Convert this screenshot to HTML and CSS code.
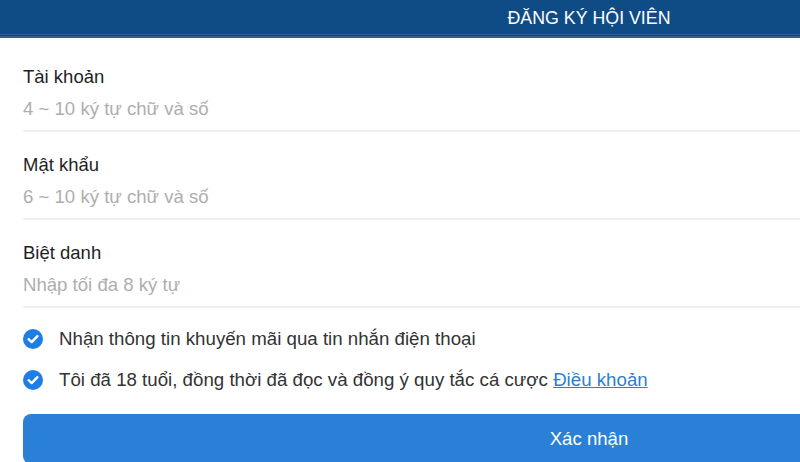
FILE: index.html
```html
<!DOCTYPE html>
<html lang="vi">
<head>
<meta charset="utf-8">
<title>Đăng ký hội viên</title>
<link rel="stylesheet" href="styles.css">
</head>
<body>
<div class="page">
  <header class="topbar">
    <h1 class="title">ĐĂNG KÝ HỘI VIÊN</h1>
  </header>
  <form class="form">
    <div class="field">
      <label class="label">Tài khoản</label>
      <input class="input" type="text" placeholder="4 ~ 10 ký tự chữ và số">
    </div>
    <div class="field">
      <label class="label">Mật khẩu</label>
      <input class="input" type="password" placeholder="6 ~ 10 ký tự chữ và số">
    </div>
    <div class="field">
      <label class="label">Biệt danh</label>
      <input class="input" type="text" placeholder="Nhập tối đa 8 ký tự">
    </div>
    <div class="check first">
      <svg class="tick" viewBox="0 0 20 20" width="20" height="20"><circle cx="10" cy="10" r="10" fill="#1d7ee6"/><path d="M5.6 10.2 L8.7 13.1 L14.4 7.2" fill="none" stroke="#fff" stroke-width="2.4" stroke-linecap="round" stroke-linejoin="round"/></svg>
      <span class="check-text">Nhận thông tin khuyến mãi qua tin nhắn điện thoại</span>
    </div>
    <div class="check">
      <svg class="tick" viewBox="0 0 20 20" width="20" height="20"><circle cx="10" cy="10" r="10" fill="#1d7ee6"/><path d="M5.6 10.2 L8.7 13.1 L14.4 7.2" fill="none" stroke="#fff" stroke-width="2.4" stroke-linecap="round" stroke-linejoin="round"/></svg>
      <span class="check-text">Tôi đã 18 tuổi, đồng thời đã đọc và đồng ý quy tắc cá cược <a class="link" href="#">Điều khoản</a></span>
    </div>
    <button class="submit" type="button">Xác nhận</button>
  </form>
</div>
</body>
</html>
```
FILE: styles.css
```css
html, body {
  margin: 0;
  padding: 0;
  background: #fff;
  overflow: hidden;
}
body {
  font-family: Arial, "Liberation Sans", sans-serif;
  color: #222;
}
.page {
  width: 1178px;
}
.topbar {
  height: 38px;
  background: linear-gradient(to bottom, #0f4c86 0, #0f4c86 34px, #2a5f96 34px, #2a5f96 35px, #0d4680 35px, #0d4680 36px, #2f6499 36px, #2f6499 38px);
  display: flex;
  align-items: center;
  justify-content: center;
}
.title {
  margin: 0 0 2px 0;
  font-size: 17.8px;
  font-weight: normal;
  color: #fff;
}
.form {
  padding: 6px 23px 0 23px;
  display: flex;
  flex-direction: column;
}
.field {
  display: flex;
  flex-direction: column;
  padding: 22px 0 10px 0;
  border-bottom: 2px solid #efefef;
}
.label {
  font-size: 18.5px;
  line-height: 22px;
  color: #1f1f1f;
}
.input {
  margin: 10px 0 0 0;
  padding: 0;
  border: 0;
  outline: none;
  height: 22px;
  font-family: Arial, "Liberation Sans", sans-serif;
  font-size: 18.6px;
  line-height: 22px;
  color: #333;
  background: transparent;
}
.input::placeholder {
  color: #aeaeae;
}
.check {
  display: flex;
  align-items: center;
  gap: 16px;
  height: 22px;
  margin-top: 19px;
}
.check.first {
  margin-top: 20px;
}
.tick {
  flex: none;
}
.check-text {
  font-size: 18.7px;
  line-height: 22px;
  color: #333;
  white-space: nowrap;
}
.link {
  color: #2a7fd4;
  text-decoration: underline;
}
.submit {
  margin-top: 23px;
  height: 50px;
  border: 0;
  border-radius: 8px;
  background: #2a7fd6;
  color: #fff;
  font-family: Arial, "Liberation Sans", sans-serif;
  font-size: 18.6px;
  cursor: pointer;
}
```
